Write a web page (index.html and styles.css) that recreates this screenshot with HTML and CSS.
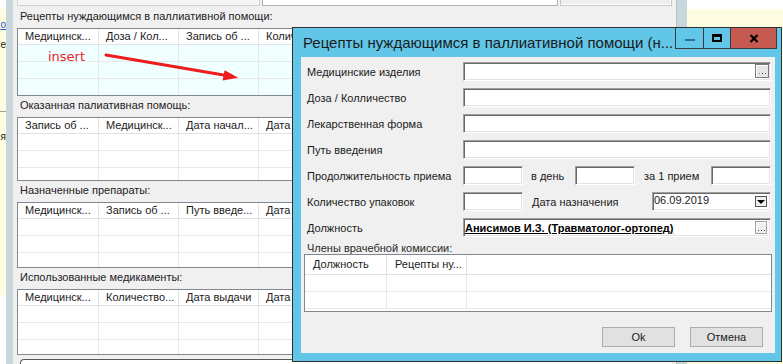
FILE: index.html
```html
<!DOCTYPE html>
<html lang="ru">
<head>
  <meta charset="UTF-8">
  <title>Рецепты нуждающимся в паллиативной помощи</title>
  <link rel="stylesheet" href="styles.css">
</head>
<body>

  <!-- Main window behind the dialog -->
  <div class="workspace">
    <div class="side side-left">
      <div class="side-body">
        <div class="side-line side-link"><span>о</span></div>
        <div class="side-line"><span>е</span></div>
        <div class="side-sep"></div>
        <div class="side-line"><span>я</span></div>
      </div>
    </div>
    <div class="splitter"></div>

    <div class="main">
      <div class="top-row">
        <div class="top-box"></div>
        <div class="top-edit"></div>
        <div class="top-panel"></div>
      </div>

      <div class="section">
        <div class="section-title">Рецепты нуждающимся в паллиативной помощи:</div>
        <div class="grid grid-active grid-1">
          <div class="grid-row grid-head">
            <div class="cell">Медицинск...</div>
            <div class="cell">Доза / Кол...</div>
            <div class="cell">Запись об ...</div>
            <div class="cell">Колич</div>
          </div>
          <div class="grid-row"><div class="cell"></div><div class="cell"></div><div class="cell"></div><div class="cell"></div></div>
          <div class="grid-row"><div class="cell"></div><div class="cell"></div><div class="cell"></div><div class="cell"></div></div>
          <div class="grid-row"><div class="cell"></div><div class="cell"></div><div class="cell"></div><div class="cell"></div></div>
        </div>
      </div>

      <div class="section">
        <div class="section-title">Оказанная палиативная помощь:</div>
        <div class="grid grid-2">
          <div class="grid-row grid-head">
            <div class="cell">Запись об ...</div>
            <div class="cell">Медицинск...</div>
            <div class="cell">Дата начал...</div>
            <div class="cell">Дата</div>
          </div>
          <div class="grid-row"><div class="cell"></div><div class="cell"></div><div class="cell"></div><div class="cell"></div></div>
          <div class="grid-row"><div class="cell"></div><div class="cell"></div><div class="cell"></div><div class="cell"></div></div>
          <div class="grid-row"><div class="cell"></div><div class="cell"></div><div class="cell"></div><div class="cell"></div></div>
        </div>
      </div>

      <div class="section">
        <div class="section-title">Назначенные препараты:</div>
        <div class="grid grid-3">
          <div class="grid-row grid-head">
            <div class="cell">Медицинск...</div>
            <div class="cell">Запись об ...</div>
            <div class="cell">Путь введе...</div>
            <div class="cell">Дата</div>
          </div>
          <div class="grid-row"><div class="cell"></div><div class="cell"></div><div class="cell"></div><div class="cell"></div></div>
          <div class="grid-row"><div class="cell"></div><div class="cell"></div><div class="cell"></div><div class="cell"></div></div>
          <div class="grid-row"><div class="cell"></div><div class="cell"></div><div class="cell"></div><div class="cell"></div></div>
        </div>
      </div>

      <div class="section">
        <div class="section-title">Использованные медикаменты:</div>
        <div class="grid grid-4">
          <div class="grid-row grid-head">
            <div class="cell">Медицинск...</div>
            <div class="cell">Количество...</div>
            <div class="cell">Дата выдачи</div>
            <div class="cell">Дата</div>
          </div>
          <div class="grid-row"><div class="cell"></div><div class="cell"></div><div class="cell"></div><div class="cell"></div></div>
          <div class="grid-row"><div class="cell"></div><div class="cell"></div><div class="cell"></div><div class="cell"></div></div>
          <div class="grid-row"><div class="cell"></div><div class="cell"></div><div class="cell"></div><div class="cell"></div></div>
        </div>
      </div>

      <div class="bottom-box"></div>
    </div>

    <div class="splitter"></div>
    <div class="side side-right">
      <div class="side-body"></div>
    </div>
  </div>

  <!-- Annotation drawn over the screenshot -->
  <div class="note-insert">insert</div>
  <svg class="note-arrow" width="145" height="40" viewBox="0 0 145 40">
    <line x1="6" y1="7" x2="125" y2="27.3" stroke="#ee1c1c" stroke-width="3" stroke-linecap="round"/>
    <polygon points="138.3,29.7 122.6,32.4 124.6,22.2" fill="#ee1c1c"/>
  </svg>

  <!-- Dialog window -->
  <div class="dialog">
    <div class="dlg-title">
      <span class="dlg-caption">Рецепты нуждающимся в паллиативной помощи (н...</span>
      <div class="dlg-controls">
        <div class="ctl ctl-min"><i></i></div>
        <div class="ctl ctl-max"><i></i></div>
        <div class="ctl ctl-close">
          <svg width="10" height="9" viewBox="0 0 10 9">
            <path d="M1.5 1 L8.5 8 M8.5 1 L1.5 8" stroke="#000" stroke-width="2.2"/>
          </svg>
        </div>
      </div>
    </div>

    <div class="dlg-client">
      <div class="form-row">
        <label>Медицинские изделия</label>
        <div class="edit edit-fill">
          <span class="dots-btn dots-big"><b></b><b></b><b></b></span>
        </div>
      </div>
      <div class="form-row">
        <label>Доза / Колличество</label>
        <div class="edit edit-fill"></div>
      </div>
      <div class="form-row">
        <label>Лекарственная форма</label>
        <div class="edit edit-fill"></div>
      </div>
      <div class="form-row">
        <label>Путь введения</label>
        <div class="edit edit-fill"></div>
      </div>
      <div class="form-row">
        <label>Продолжительность приема</label>
        <div class="edit edit-sm"></div>
        <span class="mid-label mid-day">в день</span>
        <div class="edit edit-sm"></div>
        <span class="mid-label mid-once">за 1 прием</span>
        <div class="edit edit-fill"></div>
      </div>
      <div class="form-row">
        <label>Количество упаковок</label>
        <div class="edit edit-sm"></div>
        <span class="mid-label mid-date">Дата назначения</span>
        <div class="edit edit-fill edit-date">
          <span class="edit-text">06.09.2019</span>
          <span class="drop-btn"></span>
        </div>
      </div>
      <div class="form-row form-row-last">
        <label>Должность</label>
        <div class="edit edit-fill">
          <span class="edit-text edit-link">Анисимов И.З. (Травматолог-ортопед)</span>
          <span class="dots-btn dots-small"><b></b><b></b><b></b></span>
        </div>
      </div>

      <div class="members-title">Члены врачебной комиссии:</div>
      <div class="grid dlg-grid">
        <div class="grid-row grid-head">
          <div class="cell">Должность</div>
          <div class="cell">Рецепты ну...</div>
        </div>
        <div class="grid-row"><div class="cell"></div><div class="cell"></div></div>
        <div class="grid-row"><div class="cell"></div><div class="cell"></div></div>
      </div>

      <div class="dlg-buttons">
        <button class="btn">Ok</button>
        <button class="btn">Отмена</button>
      </div>
    </div>
  </div>

</body>
</html>
```

FILE: styles.css
```css
/* Reset */
* {
  box-sizing: border-box;
  margin: 0;
  padding: 0;
}

body {
  width: 783px;
  height: 364px;
  overflow: hidden;
  position: relative;
  background-color: #fff;
  font-family: "Liberation Sans", Arial, sans-serif;
  font-size: 11px;
  color: #1b1b1b;
}

/* Main window */
.workspace {
  display: flex;
  height: 364px;
}

.side {
  display: flex;
  flex-direction: column;
  padding-top: 9px;
}

.side-left {
  width: 6px;
}

.side-right {
  flex: 1;
}

.side-body {
  background-color: #fffde1;
  overflow: hidden;
}

.side-left .side-body {
  height: 286px;
  padding-top: 9px;
}

.side-right .side-body {
  height: 100%;
}

.side-line {
  display: flex;
  justify-content: flex-end;
  height: 20px;
  line-height: 13px;
  font-size: 10px;
  white-space: nowrap;
}

.side-link span {
  color: #1b56c8;
  text-decoration: underline;
}

.side-sep {
  height: 1px;
  margin: 53px 0 18px;
  background-color: #a0a0a0;
}

.splitter {
  width: 7px;
  background-color: #c8d7dc;
}

.main + .splitter {
  width: 11px;
  border-left: 1px solid #b4c2c6;
}

.main {
  width: 663px;
  padding: 0 4px;
  background-color: #f0f0f0;
}

.top-row {
  display: flex;
  gap: 2px;
  height: 6px;
}

.top-box {
  width: 243px;
  border: 1px solid #d2d2d2;
  border-top: 0;
  background-color: #f5f5f5;
}

.top-edit {
  flex: 1;
  border: 1px solid #b1b1b1;
  border-top: 0;
  background-color: #fff;
}

.top-panel {
  width: 112px;
  border: 1px solid #c8c8c8;
  border-top: 0;
  box-shadow: inset -1px -1px 0 #fff;
  background-color: #eee;
}

/* Sections with grids */
.section-title {
  height: 13px;
  line-height: 13px;
  margin: 3px 0 5px 3px;
  white-space: nowrap;
  color: #1e1a24;
}

.top-row + .section .section-title {
  margin-top: 4px;
}

.grid {
  border: 1px solid #828790;
  background-color: #fff;
  overflow: hidden;
}

.grid-1 { height: 68px; }
.grid-2 { height: 64px; }
.grid-3 { height: 66px; }
.grid-4 { height: 66px; }

.grid-row {
  display: flex;
  height: 17px;
  border-bottom: 1px solid #e8e8e8;
}

.grid-head {
  height: 16px;
  border-bottom-color: #e2e2e2;
}

.cell {
  width: 80px;
  flex-shrink: 0;
  border-right: 1px solid #e8e8e8;
  padding-left: 6px;
  line-height: 15px;
  white-space: nowrap;
  overflow: hidden;
}

.cell:first-child {
  width: 81px;
}

.main .cell:nth-child(4) {
  width: 35px;
}

.grid-head .cell {
  padding-left: 7px;
  border-right-color: #e3e3e3;
}

.grid-active .grid-row:not(.grid-head) {
  background-color: #f0ffff;
}

.bottom-box {
  height: 12px;
  margin: 4px 0 0 3px;
  border-top: 1px solid #5a5a5a;
  border-left: 1px solid #5a5a5a;
  border-top-left-radius: 4px;
  background-color: #fff;
}

/* Annotation */
.note-insert {
  position: absolute;
  left: 48px;
  top: 49px;
  line-height: 15px;
  font-family: "DejaVu Sans", sans-serif;
  font-size: 13px;
  color: #e8242a;
}

.note-arrow {
  position: absolute;
  left: 100px;
  top: 48px;
}

/* Dialog */
.dialog {
  position: absolute;
  left: 292px;
  top: 27px;
  width: 490px;
  height: 335px;
  border: 1px solid #2f2f2f;
  background-color: #62c6e8;
}

.dlg-title {
  display: flex;
  align-items: flex-start;
  height: 29px;
}

.dlg-caption {
  align-self: center;
  padding: 0 0 1px 10px;
  font-size: 15px;
  white-space: nowrap;
  color: #1a1a1a;
}

.dlg-controls {
  display: flex;
  margin: 0 4px 0 auto;
  border: solid #3a3a3a;
  border-width: 0 1px 1px 0;
}

.ctl {
  display: flex;
  align-items: center;
  justify-content: center;
  height: 20px;
  border-left: 1px solid #3a3a3a;
}

.ctl-min {
  width: 28px;
}

.ctl-min i {
  width: 10px;
  height: 2px;
  margin-top: 3px;
  background-color: #2f7390;
}

.ctl-max {
  width: 27px;
}

.ctl-max i {
  width: 10px;
  height: 8px;
  border: 2px solid #000;
  border-top-width: 3px;
}

.ctl-close {
  width: 46px;
  background-color: #c75a50;
}

.dlg-client {
  height: 296px;
  margin: 0 6px 0 8px;
  padding: 5px 4px 0 6px;
  background-color: #f0f0f0;
}

.form-row {
  display: flex;
  align-items: center;
  height: 19px;
  margin-bottom: 7px;
}

.form-row label {
  width: 156px;
  flex-shrink: 0;
  white-space: nowrap;
}

.form-row-last {
  margin-bottom: 5px;
}

.edit {
  position: relative;
  display: flex;
  align-items: center;
  height: 19px;
  background-color: #fff;
  border: 1px solid;
  border-color: #a0a0a0 #fff #fff #a0a0a0;
  box-shadow: inset 1px 1px 0 #696969, inset -1px -1px 0 #e3e3e3;
}

.edit-fill {
  flex: 1;
}

.edit-sm {
  width: 60px;
}

.mid-label {
  flex-shrink: 0;
  white-space: nowrap;
  padding-left: 8px;
}

.mid-day { width: 52px; }
.mid-once { width: 76px; padding-left: 9px; }
.mid-date { width: 129px; padding-left: 9px; }

.edit-text {
  padding-left: 1px;
  white-space: nowrap;
}

.edit-date .edit-text {
  margin-top: -3px;
}

.edit-link {
  font-weight: bold;
  text-decoration: underline;
  color: #000;
}

/* Small buttons inside edits */
.dots-btn {
  position: absolute;
  display: flex;
  align-items: flex-end;
  justify-content: center;
  gap: 2px;
  background-color: #e6e6e6;
  border: 1px solid #7a7a7a;
  box-shadow: inset 1px 1px 0 #fff;
}

.dots-btn b {
  width: 1px;
  height: 1px;
  background-color: #333;
}

.dots-big {
  right: 1px;
  top: 1px;
  width: 14px;
  height: 14px;
  padding-bottom: 3px;
}

.dots-big b:first-child { background-color: #c06a10; }
.dots-big b:last-child { background-color: #2a8a3a; }

.dots-small {
  right: 3px;
  top: 2px;
  width: 12px;
  height: 13px;
  padding-bottom: 2px;
  border-color: #a0a0a0;
  background-color: #f0f0f0;
}

.drop-btn {
  position: absolute;
  right: 3px;
  top: 3px;
  width: 12px;
  height: 11px;
  border: 1px solid #555;
  background-color: #f0f0f0;
  display: flex;
  align-items: center;
  justify-content: center;
}

.drop-btn::after {
  content: "";
  border-left: 4px solid transparent;
  border-right: 4px solid transparent;
  border-top: 4px solid #000;
  margin-top: 1px;
}

.members-title {
  height: 12px;
  line-height: 12px;
  color: #2a2a2a;
  white-space: nowrap;
}

.dlg-grid {
  width: 468px;
  height: 58px;
  margin-left: -3px;
}

.dlg-grid .grid-head {
  height: 20px;
}

.dlg-grid .grid-head .cell {
  line-height: 19px;
  padding-left: 8px;
}

.dlg-grid .cell:first-child {
  width: 82px;
}

.dlg-buttons {
  display: flex;
  justify-content: flex-end;
  gap: 15px;
  margin-top: 15px;
  padding-right: 8px;
}

.btn {
  width: 73px;
  height: 20px;
  border: 1px solid #adadad;
  background-color: #e1e1e1;
  font-family: "Liberation Sans", Arial, sans-serif;
  font-size: 11px;
  color: #1b1b1b;
}
```
